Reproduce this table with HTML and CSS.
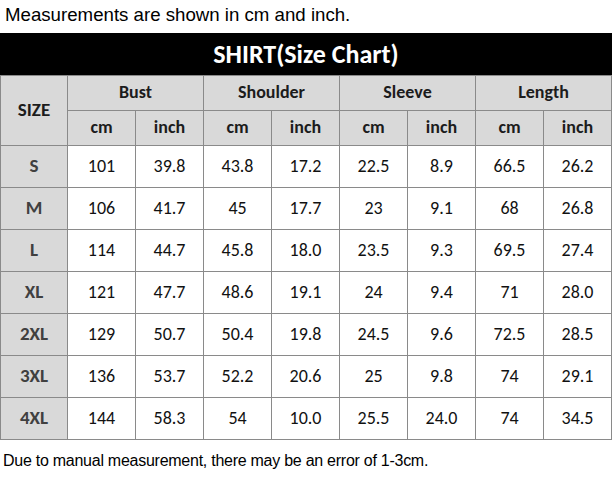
FILE: index.html
```
<!DOCTYPE html>
<html>
<head>
<meta charset="utf-8">
<link rel="stylesheet" href="styles.css">
</head>
<body>
<div class="note top">Measurements are shown in cm and inch.</div>
<div class="title">SHIRT(Size Chart)</div>
<div class="chart">
  <div class="hd size">SIZE</div>
  <div class="hd grp">Bust</div>
  <div class="hd grp">Shoulder</div>
  <div class="hd grp">Sleeve</div>
  <div class="hd grp">Length</div>
  <div class="hd">cm</div><div class="hd">inch</div>
  <div class="hd">cm</div><div class="hd">inch</div>
  <div class="hd">cm</div><div class="hd">inch</div>
  <div class="hd">cm</div><div class="hd">inch</div>

  <div class="sz">S</div><div class="v">101</div><div class="v">39.8</div><div class="v">43.8</div><div class="v">17.2</div><div class="v">22.5</div><div class="v">8.9</div><div class="v">66.5</div><div class="v">26.2</div>
  <div class="sz">M</div><div class="v">106</div><div class="v">41.7</div><div class="v">45</div><div class="v">17.7</div><div class="v">23</div><div class="v">9.1</div><div class="v">68</div><div class="v">26.8</div>
  <div class="sz">L</div><div class="v">114</div><div class="v">44.7</div><div class="v">45.8</div><div class="v">18.0</div><div class="v">23.5</div><div class="v">9.3</div><div class="v">69.5</div><div class="v">27.4</div>
  <div class="sz">XL</div><div class="v">121</div><div class="v">47.7</div><div class="v">48.6</div><div class="v">19.1</div><div class="v">24</div><div class="v">9.4</div><div class="v">71</div><div class="v">28.0</div>
  <div class="sz">2XL</div><div class="v">129</div><div class="v">50.7</div><div class="v">50.4</div><div class="v">19.8</div><div class="v">24.5</div><div class="v">9.6</div><div class="v">72.5</div><div class="v">28.5</div>
  <div class="sz">3XL</div><div class="v">136</div><div class="v">53.7</div><div class="v">52.2</div><div class="v">20.6</div><div class="v">25</div><div class="v">9.8</div><div class="v">74</div><div class="v">29.1</div>
  <div class="sz">4XL</div><div class="v">144</div><div class="v">58.3</div><div class="v">54</div><div class="v">10.0</div><div class="v">25.5</div><div class="v">24.0</div><div class="v">74</div><div class="v">34.5</div>
</div>
<div class="note bottom">Due to manual measurement, there may be an error of 1-3cm.</div>
</body>
</html>
```
FILE: styles.css
```
html, body {
  margin: 0;
  padding: 0;
  background: #fff;
}
body {
  width: 613px;
  height: 483px;
  overflow: hidden;
}
.note {
  font-family: "Liberation Sans", Arial, sans-serif;
  color: #000;
}
.note.top {
  height: 33px;
  box-sizing: border-box;
  padding: 4px 0 0 5px;
  font-size: 18.67px;
  line-height: 22px;
}
.note.bottom {
  padding: 11px 0 0 3px;
  font-size: 16px;
  line-height: 20px;
  letter-spacing: -0.26px;
}
.title {
  width: 612px;
  height: 42px;
  background: #000;
  color: #fff;
  font-family: Carlito, Lato, sans-serif;
  font-weight: 700;
  font-size: 26px;
  display: flex;
  align-items: center;
  justify-content: center;
}
.chart {
  width: 612px;
  box-sizing: border-box;
  display: grid;
  grid-template-columns: 66px repeat(8, 67px);
  grid-template-rows: 34px 34px repeat(7, 41px);
  gap: 1px;
  padding: 1px;
  background: #8a8a8a;
  font-family: Carlito, Lato, sans-serif;
}
.chart > div {
  display: flex;
  align-items: center;
  justify-content: center;
  box-sizing: border-box;
  padding-bottom: 2px;
}
.hd {
  background: #d9d9d9;
  color: #1c1c1c;
  font-weight: 700;
  font-size: 18px;
}
.hd.size {
  grid-row: span 2;
  font-size: 19px;
}
.hd.grp {
  grid-column: span 2;
}
.sz {
  background: #d9d9d9;
  color: #404040;
  font-weight: 700;
  font-size: 19px;
}
.v {
  background: #fff;
  color: #111;
  font-size: 18px;
}
```
